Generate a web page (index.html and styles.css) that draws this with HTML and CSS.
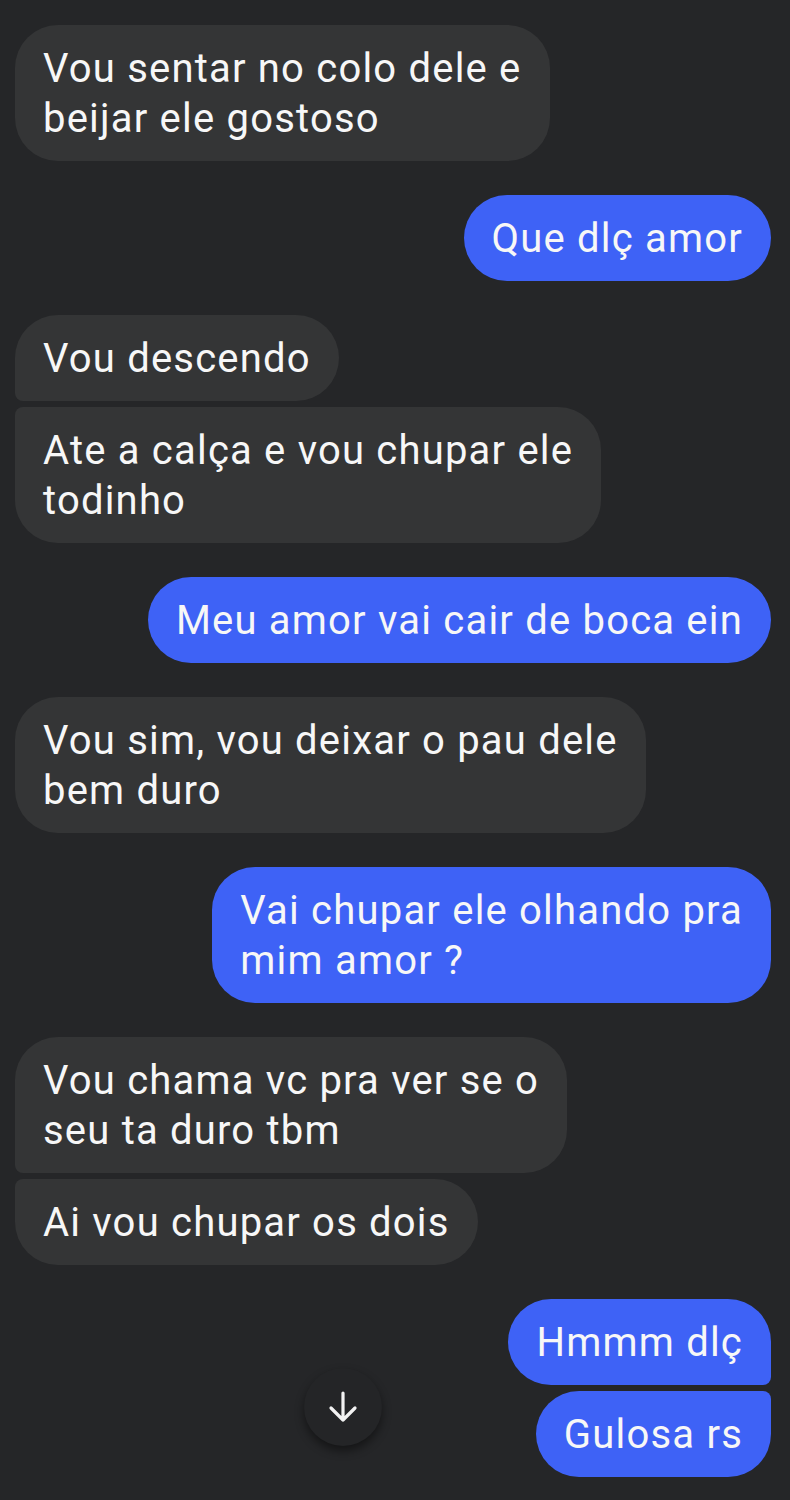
FILE: index.html
```html
<!DOCTYPE html>
<html lang="pt">

<head>
    <meta charset="UTF-8">
    <meta name="viewport" content="width=device-width, initial-scale=1.0">
    <title>Mensagens</title>

    <link rel="stylesheet" href="styles.css">
</head>

<body>
    <div class="chat">
        <div class="msg in">Vou sentar no colo dele e<br>beijar ele gostoso</div>

        <div class="msg out">Que dlç amor</div>

        <div class="msg in first">Vou descendo</div>
        <div class="msg in last">Ate a calça e vou chupar ele<br>todinho</div>

        <div class="msg out">Meu amor vai cair de boca ein</div>

        <div class="msg in">Vou sim, vou deixar o pau dele<br>bem duro</div>

        <div class="msg out">Vai chupar ele olhando pra<br>mim amor ?</div>

        <div class="msg in first">Vou chama vc pra ver se o<br>seu ta duro tbm</div>
        <div class="msg in last">Ai vou chupar os dois</div>

        <div class="msg out first">Hmmm dlç</div>
        <div class="msg out last">Gulosa rs</div>
    </div>

    <button class="scroll-down" aria-label="Ir para o fim">
        <svg width="30" height="32" viewBox="0 0 30 32">
            <path d="M15 2 V29 M3 17 L15 29 L27 17" fill="none" stroke="#f2f2f2" stroke-width="3.2"
                stroke-linecap="round" stroke-linejoin="round" />
        </svg>
    </button>
</body>

</html>
```

FILE: styles.css
```css
body {
    margin: 0;
    background-color: #252628;
    font-family: Roboto, "Noto Sans", sans-serif;
    min-height: 1500px;
    position: relative;
}

.chat {
    display: flex;
    flex-direction: column;
    padding: 25px 19px 20px 15px;
}

.msg {
    font-size: 40px;
    letter-spacing: 1.2px;
    line-height: 50px;
    color: #f7f7f7;
    padding: 19px 28px 17px 28px;
    border-radius: 43px;
    margin-top: 34px;
    white-space: nowrap;
}

.msg:first-child {
    margin-top: 0;
}

.msg.in {
    align-self: flex-start;
    background-color: #343536;
}

.msg.out {
    align-self: flex-end;
    background-color: #3e62f6;
}

.msg.last {
    margin-top: 6px;
}

.msg.in.first {
    border-bottom-left-radius: 8px;
}

.msg.in.last {
    border-top-left-radius: 8px;
}

.msg.out.first {
    border-bottom-right-radius: 8px;
}

.msg.out.last {
    border-top-right-radius: 8px;
}

.scroll-down {
    position: absolute;
    left: 304px;
    top: 1368px;
    width: 78px;
    height: 78px;
    border-radius: 50%;
    border: none;
    background-color: #242527;
    box-shadow: 0 5px 10px rgba(0, 0, 0, 0.45);
    display: flex;
    align-items: center;
    justify-content: center;
    padding: 0;
}
```
